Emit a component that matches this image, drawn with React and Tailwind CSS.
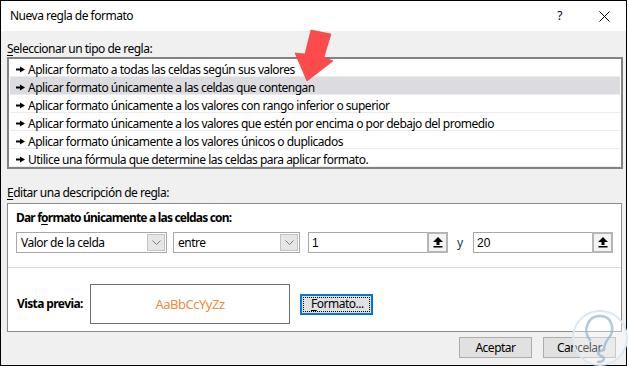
import React from "react";

const F = { fontFamily: '"Noto Sans", "Liberation Sans", sans-serif' };

function RowGlyph() {
  return (
    <svg width="9" height="7" viewBox="0 0 9 7" className="shrink-0">
      <rect x="0" y="2.5" width="5" height="2" fill="#000" />
      <polygon points="4,0.5 9,3.5 4,6.5" fill="#000" />
    </svg>
  );
}

function Chevron() {
  return (
    <div className="w-[18px] h-[17px] mr-[1px] bg-[#e6e6e6] border border-[#c4c4c4] flex items-center justify-center">
      <svg width="9" height="5" viewBox="0 0 9 5">
        <polyline points="0.5,0.5 4.5,4.5 8.5,0.5" fill="none" stroke="#7a7a7a" strokeWidth="1" />
      </svg>
    </div>
  );
}

function UpBtn() {
  return (
    <div className="w-[21px] h-[21px] -mr-[1px] border-2 border-[#b5b5b5] bg-[#f3f3f3] flex items-center justify-center">
      <svg width="10" height="11" viewBox="0 0 10 11">
        <polygon points="5,0 10,5 6.5,5 6.5,8 3.5,8 3.5,5 0,5" fill="#000" />
        <rect x="0.5" y="9" width="9" height="1.5" fill="#000" />
      </svg>
    </div>
  );
}

const rows = [
  "Aplicar formato a todas las celdas según sus valores",
  "Aplicar formato únicamente a las celdas que contengan",
  "Aplicar formato únicamente a los valores con rango inferior o superior",
  "Aplicar formato únicamente a los valores que estén por encima o por debajo del promedio",
  "Aplicar formato únicamente a los valores únicos o duplicados",
  "Utilice una fórmula que determine las celdas para aplicar formato.",
];

export default function App() {
  return (
    <div className="w-[629px] h-[366px] bg-white relative overflow-hidden text-[12px] text-black tracking-[-0.5px]" style={F}>
      <div className="w-[627px] h-[366px] border border-black bg-[#f0f0f0] flex flex-col">
        {/* title bar */}
        <div className="h-[30px] bg-white flex items-center pl-[9px] shrink-0">
          <span className="text-[12px] leading-[16px]">Nueva regla de formato</span>
          <span className="ml-auto text-[12px] leading-[16px]">?</span>
          <svg width="11" height="11" viewBox="0 0 11 11" className="ml-[37px] mr-[16px]">
            <path d="M0.5 0.5 L10.5 10.5 M10.5 0.5 L0.5 10.5" stroke="#000" strokeWidth="1" />
          </svg>
        </div>

        {/* body */}
        <div className="flex-1 pl-[6px] pr-[3px] pt-[10px] flex flex-col">
          <div className="h-[16px] leading-[16px]">
            <span className="underline underline-offset-2">S</span>eleccionar un tipo de regla:
          </div>
          <div className="w-[616px] border-2 border-[#828282] bg-white px-[1px]">
            {rows.map((r, i) => (
              <div
                key={i}
                className={
                  "h-[18px] border-b border-[#ececec] flex items-center pl-[6px] pt-[4px] " +
                  (i === 1 ? "bg-[#dcdce0]" : "")
                }
              >
                <RowGlyph />
                <span className="ml-[3px] leading-[16px] whitespace-nowrap">{r}</span>
              </div>
            ))}
          </div>

          <div className="mt-[16px] h-[16px] leading-[16px]">
            <span className="underline underline-offset-2">E</span>ditar una descripción de regla:
          </div>
          <div className="mt-[2px] w-[615px] h-[129px] border border-[#8a8a8a] bg-white flex flex-col">
            <div className="h-[64px] border-b border-[#d9d9d9] pl-[8px] pt-[6px] shrink-0">
              <div className="h-[16px] leading-[16px] font-bold tracking-[-0.8px]">
                Dar f<span className="underline underline-offset-2">o</span>rmato únicamente a las celdas con:
              </div>
              <div className="mt-[6px] flex items-center h-[21px]">
                <div className="w-[151px] h-[21px] border border-[#a8a8a8] bg-white flex items-center justify-between pl-[4px]">
                  <span className="leading-[16px]">Valor de la celda</span>
                  <Chevron />
                </div>
                <div className="ml-[6px] w-[127px] h-[21px] border border-[#a8a8a8] bg-white flex items-center justify-between pl-[4px]">
                  <span className="leading-[16px]">entre</span>
                  <Chevron />
                </div>
                <div className="ml-[8px] w-[140px] h-[21px] border border-[#a8a8a8] bg-white flex items-center justify-between pl-[3px]">
                  <span className="leading-[16px] tracking-normal" style={{ fontFamily: '"Liberation Sans", sans-serif' }}>1</span>
                  <UpBtn />
                </div>
                <span className="ml-[9px] w-[16px] leading-[16px] text-[#1a2f6a]">y</span>
                <div className="w-[140px] h-[21px] border border-[#a8a8a8] bg-white flex items-center justify-between pl-[3px]">
                  <span className="leading-[16px] tracking-normal" style={{ fontFamily: '"Liberation Sans", sans-serif' }}>20</span>
                  <UpBtn />
                </div>
              </div>
            </div>
            <div className="flex-1 pl-[9px] pt-[16px]">
              <div className="flex items-center h-[40px]">
                <div className="w-[73px] font-bold leading-[16px] whitespace-nowrap tracking-[-0.6px]">Vista previa:</div>
                <div className="w-[200px] h-[40px] border border-[#6e6e6e] flex items-center justify-center">
                  <span className="text-[13px] text-[#f08a3c] leading-[16px]">AaBbCcYyZz</span>
                </div>
                <div className="ml-[10px] w-[73px] h-[21px] border-2 border-[#0078d7] bg-[#e1e1e1] p-[1px]">
                  <div className="w-full h-full border border-dotted border-black flex items-center pl-[7px] leading-[14px] whitespace-nowrap">
                    <span className="underline underline-offset-2">F</span>ormato...
                  </div>
                </div>
              </div>
            </div>
          </div>

          <div className="mt-[5px] flex justify-end pr-[7px] gap-[11px]">
            <div className="w-[73px] h-[21px] border border-[#adadad] bg-[#e1e1e1] flex items-center justify-center leading-[16px]">
              Aceptar
            </div>
            <div className="w-[73px] h-[21px] border border-[#adadad] bg-[#e1e1e1] flex items-center justify-center leading-[16px]">
              Cancelar
            </div>
          </div>
        </div>
      </div>

      {/* red arrow annotation */}
      <svg className="absolute left-0 top-0 pointer-events-none" width="629" height="366" viewBox="0 0 629 366">
        <polygon
          points="311,30 331,34 324,57 333,61 307,81 295,53 305,54"
          fill="#fd4b4b"
          stroke="#e23a3a"
          strokeWidth="0.6"
        />
      </svg>

      {/* watermark */}
      <svg className="absolute pointer-events-none" style={{ left: 568, top: 306 }} width="61" height="60" viewBox="0 0 61 60">
        <circle cx="32" cy="32" r="27" fill="#ffffff" fillOpacity="0.35" stroke="#dbe8f2" strokeWidth="2" />
        <path d="M22 34 C14 24 20 10 32 10 C44 10 48 24 40 33 C37 37 36 40 36 44 M36 44 C30 45 28 48 33 50 C38 52 36 56 30 56"
          fill="none" stroke="#8fb3d2" strokeOpacity="0.7" strokeWidth="2.5" strokeLinecap="round" />
      </svg>
    </div>
  );
}
